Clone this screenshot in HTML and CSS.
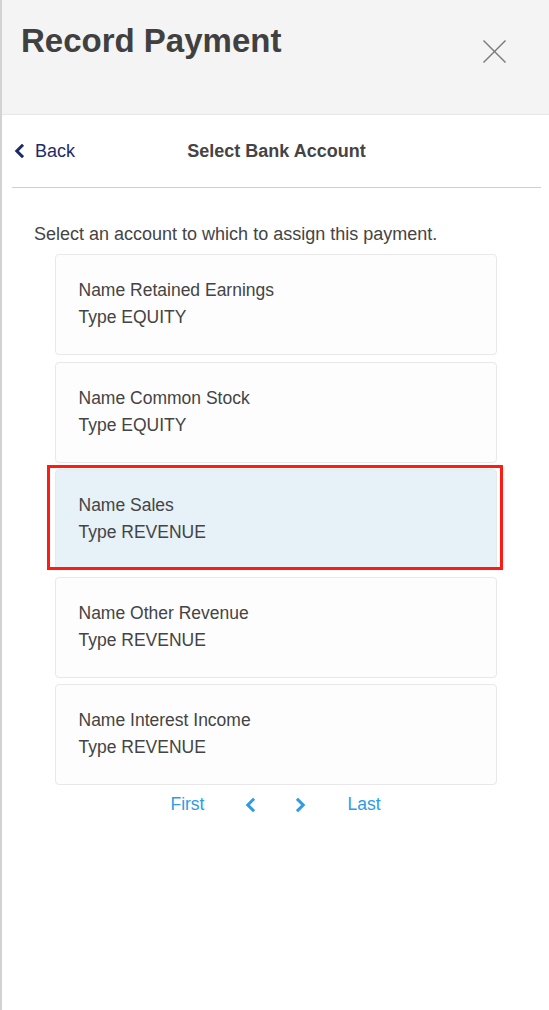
FILE: index.html
```html
<!DOCTYPE html>
<html lang="en">
<head>
<meta charset="UTF-8" />
<meta name="viewport" content="width=device-width, initial-scale=1" />
<title>Record Payment</title>
<link rel="stylesheet" href="styles.css">
</head>
<body>

  <div class="sheet">
    <div class="header">
      <h1>Record Payment</h1>
      <button class="close" type="button" aria-label="Close">
        <svg width="23" height="23" viewBox="0 0 23 23">
          <line x1="0.5" y1="0.5" x2="22.5" y2="22.5" />
          <line x1="22.5" y1="0.5" x2="0.5" y2="22.5" />
        </svg>
      </button>
    </div>

    <div class="nav">
      <a class="back" href="#">
        <svg width="10" height="14" viewBox="0 0 10 14">
          <polyline points="8,1.8 2.8,7 8,12.2" />
        </svg>
        Back
      </a>
      <div class="nav-title">Select Bank Account</div>
      <div></div>
    </div>

    <p class="intro">Select an account to which to assign this payment.</p>

    <div class="accounts">
      <div class="account">
        <div>Name Retained Earnings</div>
        <div>Type EQUITY</div>
      </div>
      <div class="account">
        <div>Name Common Stock</div>
        <div>Type EQUITY</div>
      </div>
      <div class="account selected">
        <div>Name Sales</div>
        <div>Type REVENUE</div>
      </div>
      <div class="account">
        <div>Name Other Revenue</div>
        <div>Type REVENUE</div>
      </div>
      <div class="account">
        <div>Name Interest Income</div>
        <div>Type REVENUE</div>
      </div>
    </div>

    <div class="pager">
      <a href="#">First</a>
      <a href="#" class="arrow" aria-label="Previous">
        <svg width="10" height="14" viewBox="0 0 10 14">
          <polyline points="8,1.8 2.8,7 8,12.2" />
        </svg>
      </a>
      <a href="#" class="arrow" aria-label="Next">
        <svg width="10" height="14" viewBox="0 0 10 14">
          <polyline points="2,1.8 7.2,7 2,12.2" />
        </svg>
      </a>
      <a href="#">Last</a>
    </div>
  </div>

</body>
</html>
```

FILE: styles.css
```css
body, html {
  margin: 0; padding: 0; height: 100%;
  font-family: "Liberation Sans", Arial, Helvetica, sans-serif;
  background: #fff;
  color: #444;
}

/* whole panel, grey rule on the left */
.sheet {
  min-height: 100%;
  border-left: 2px solid #d2d2d2;
  box-sizing: border-box;
}

.header {
  height: 114px;
  background: #f4f4f4;
  border-bottom: 1px solid #e8e8e8;
  display: flex;
  justify-content: space-between;
  align-items: flex-start;
  padding-left: 19px;
}

.header h1 {
  margin: 21px 0 0;
  font-size: 33px;
  line-height: 40px;
  font-weight: 700;
  color: #404040;
}

.close {
  margin: 40px 43px 0 0;
  padding: 0;
  border: none;
  background: none;
  width: 23px;
  height: 23px;
  cursor: pointer;
}

.close svg {
  display: block;
  stroke: #7a7a7a;
  stroke-width: 1.4;
}

.nav {
  height: 72px;
  margin: 0 8px 0 10px;
  border-bottom: 1px solid #cfcfcf;
  display: grid;
  grid-template-columns: 1fr auto 1fr;
  align-items: center;
}

.back {
  display: flex;
  align-items: center;
  gap: 11px;
  padding-left: 2px;
  color: #1d2a6a;
  text-decoration: none;
  font-size: 18px;
}

.back svg, .arrow svg {
  display: block;
  fill: none;
  stroke: currentColor;
  stroke-width: 3;
  stroke-linecap: square;
}

.nav-title {
  font-size: 18px;
  font-weight: 700;
  color: #444;
}

.intro {
  margin: 33px 0 0;
  padding-left: 32px;
  font-size: 18px;
  line-height: 27px;
}

.accounts {
  width: 442px;
  margin: 6px auto 0;
  display: flex;
  flex-direction: column;
  gap: 6.5px;
}

.account {
  position: relative;
  padding: 22px 23px 23px;
  background: #fdfdfd;
  border: 1px solid #e8e8e8;
  border-radius: 4px;
  font-size: 17.5px;
  line-height: 27px;
}

.account.selected {
  background: #e6f1f8;
}

/* red highlight box round the chosen row */
.account.selected::after {
  content: "";
  position: absolute;
  top: -5px; left: -9px; right: -7px; bottom: -1px;
  border: 3px solid #ff1a12;
  pointer-events: none;
}

.pager {
  margin-top: 6px;
  display: flex;
  justify-content: center;
  align-items: center;
  gap: 41px;
  font-size: 17.5px;
  line-height: 27px;
}

.pager a {
  color: #2d9be5;
  text-decoration: none;
}
```
